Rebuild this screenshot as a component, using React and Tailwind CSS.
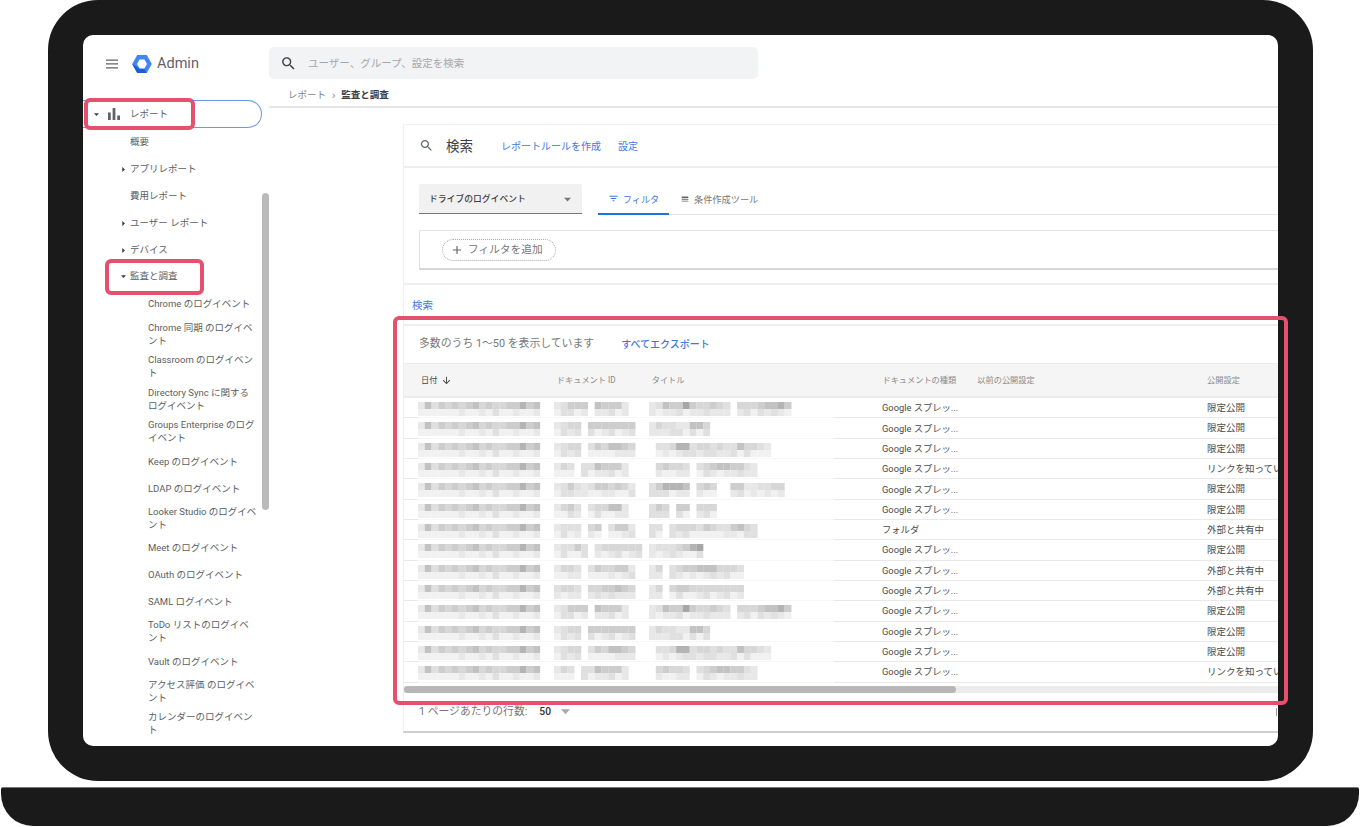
const SEARCH = "M15.5 14h-.79l-.28-.27C15.41 12.59 16 11.11 16 9.5 16 5.91 13.09 3 9.5 3S3 5.91 3 9.5 5.91 16 9.5 16c1.61 0 3.09-.59 4.23-1.57l.27.28v.79l5 4.99L20.49 19l-4.99-5zm-6 0C7.01 14 5 11.99 5 9.5S7.01 5 9.5 5 14 7.01 14 9.5 11.99 14 9.5 14z";

function Icon({ d, size = 14, color = "#5f6368" }) {
  return (
    <svg width={size} height={size} viewBox="0 0 24 24" fill={color} className="shrink-0">
      <path d={d} />
    </svg>
  );
}

function Caret({ dir = "down", color = "#3c4043", size = 5, className = "" }) {
  return (
    <svg width={size} height={size} viewBox="0 0 10 10" fill={color} className={"shrink-0 " + className}>
      {dir === "down" ? <path d="M0 2.5h10L5 8z" /> : <path d="M2.5 0v10L8 5z" />}
    </svg>
  );
}

const subItems = [
  ["概要", null],
  ["アプリレポート", "right"],
  ["費用レポート", null],
  ["ユーザー レポート", "right"],
  ["デバイス", "right"],
  ["監査と調査", "down"],
];

const logItems = [
  ["Chrome のログイベント"],
  ["Chrome 同期 のログイベ", "ント"],
  ["Classroom のログイベン", "ト"],
  ["Directory Sync に関する", "ログイベント"],
  ["Groups Enterprise のログ", "イベント"],
  ["Keep のログイベント"],
  ["LDAP のログイベント"],
  ["Looker Studio のログイベ", "ント"],
  ["Meet のログイベント"],
  ["OAuth のログイベント"],
  ["SAML ログイベント"],
  ["ToDo リストのログイベ", "ント"],
  ["Vault のログイベント"],
  ["アクセス評価 のログイベ", "ント"],
  ["カレンダーのログイベン", "ト"],
];

function Sidebar() {
  return (
    <aside className="w-[186px] h-full shrink-0 relative overflow-hidden text-[#5a5e62] text-[9.5px]">
      <div className="h-[65px] flex items-center pl-[22px] pb-[8px]">
        <svg width="16" height="16" viewBox="0 0 16 16" className="shrink-0 -ml-px">
          <path d="M2 3.4h12v1.3H2zM2 7.3h12v1.3H2zM2 11.2h12v1.3H2z" fill="#5f6368" />
        </svg>
        <svg width="20" height="20" viewBox="0 0 20 20" className="ml-[12px] shrink-0">
          <path d="M5.2 1h9.6L19.8 10l-5 9H5.2L.2 10z" fill="#4285f4" />
          <path d="M.2 10l5 9h9.6l-2.7-4.5H7.6z" fill="#1a5fd0" />
          <path d="M7.6 5.5h4.8L15 10l-2.6 4.5H7.6L5 10z" fill="#ffffff" />
        </svg>
        <span className="ml-[5px] text-[14.5px] text-[#5f6368] font-[Roboto,sans-serif]">Admin</span>
      </div>

      <div className="h-[28px] w-[179px] flex items-center border border-l-0 border-[#6f96e6] rounded-r-[14px] pl-[11px]">
        <Caret color="#3c4043" />
        <svg width="12" height="12" viewBox="0 0 13 13" fill="#5f6368" className="ml-[9px] shrink-0">
          <path d="M0 5h3v8H0zM5 0h3v13H5zM10 8h3v5h-3z" />
        </svg>
        <span className="ml-[10px]">レポート</span>
      </div>

      <div className="h-[1.5px]" />
      {subItems.map(([label, dir], i) => (
        <div key={label} className={"flex items-center " + (i === 0 || i === 5 ? "h-[26px]" : "h-[27px]")}>
          <div className="w-[43px] flex justify-end">
            {dir && <Caret dir={dir} color="#3c4043" />}
          </div>
          <span className="ml-[4px]">{label}</span>
        </div>
      ))}

      {logItems.map((lines, i) => (
        <div
          key={lines[0]}
          className={"flex flex-col justify-center pl-[65px] leading-[13px] whitespace-nowrap " + (i === 0 ? "h-[28px]" : lines.length > 1 ? "h-[32.5px]" : "h-[27px]")}
        >
          {lines.map((l) => (
            <span key={l}>{l}</span>
          ))}
        </div>
      ))}

      <div className="absolute left-[179px] top-[158px] w-[7px] h-[317px] rounded-full bg-[#bababa]" />
    </aside>
  );
}

const GRAYS = {
  1: "#f1f1f1",
  2: "#e8e8e8",
  3: "#e0e0e0",
  4: "#d7d7d7",
  5: "#cdcdcd",
  6: "#c2c2c2",
  7: "#b4b4b4",
  8: "#a6a6a6",
  9: "#969696",
};
const CELL = 6.78;

const DATE_TOP = "263545456454455756";
const DATE_BOT = "111111211213112112";

const MOSAIC = [
  ["23555 65552", "236558544543 44456675"],
  ["2344 5555555", "243322664"],
  ["2344 3546654", " 33477344343364432"],
  ["243 3365552", " 45443 345665532"],
  ["235323554542", "357776 454  55223344"],
  ["2453 344662", "354 55 444"],
  ["2333 45 3552", "33 3444354335643"],
  ["23353 3444444", "23334578"],
  ["2443 3544552", "24 34556664443"],
  ["3443 4455654", "24 45544444444"],
];
const rowsMosaic = [0, 1, 2, 3, 4, 5, 6, 7, 8, 9, 0, 1, 2, 3].map((i) => MOSAIC[i]);

function Strip({ pattern, x, y }) {
  return Array.from(pattern).map((c, i) => {
    if (c === " ") return null;
    return <rect key={i} x={x + i * CELL} y={y} width={CELL + 0.1} height={7} fill={GRAYS[Number(c)]} />;
  });
}

function Mosaic({ id, title }) {
  const soft = (s, shift) => Array.from(s).map((c, i) => (c === " " ? c : String(1 + ((Number(c) + i + shift) % 3)))).join("");
  return (
    <svg width="416" height="14" viewBox="0 0 416 14" className="block">
      <Strip pattern={DATE_TOP} x={0} y={0} />
      <Strip pattern={DATE_BOT} x={0} y={7} />
      <Strip pattern={id} x={136} y={0} />
      <Strip pattern={soft(id, 1)} x={136} y={7} />
      <Strip pattern={title} x={231} y={0} />
      <Strip pattern={soft(title, 2)} x={231} y={7} />
    </svg>
  );
}

const rows = [
  ["Google スプレッ...", "限定公開"],
  ["Google スプレッ...", "限定公開"],
  ["Google スプレッ...", "限定公開"],
  ["Google スプレッ...", "リンクを知ってい"],
  ["Google スプレッ...", "限定公開"],
  ["Google スプレッ...", "限定公開"],
  ["フォルダ", "外部と共有中"],
  ["Google スプレッ...", "限定公開"],
  ["Google スプレッ...", "外部と共有中"],
  ["Google スプレッ...", "外部と共有中"],
  ["Google スプレッ...", "限定公開"],
  ["Google スプレッ...", "限定公開"],
  ["Google スプレッ...", "限定公開"],
  ["Google スプレッ...", "リンクを知ってい"],
];

function Table() {
  return (
    <div className="flex flex-col">
      <div className="h-[35px] pt-[1px] flex items-center bg-[#f5f5f5] border-t border-b-2 border-[#ececec] text-[8.2px] text-[#8a8a8a] whitespace-nowrap">
        <div className="w-[153px] pl-[17px] flex items-center gap-[4px] text-[#444]">
          日付
          <Icon d="M20 12l-1.41-1.41L13 16.17V4h-2v12.17l-5.58-5.59L4 12l8 8 8-8z" size={11} color="#444" />
        </div>
        <div className="w-[95px]">ドキュメント ID</div>
        <div className="w-[231px]">タイトル</div>
        <div className="w-[95px]">ドキュメントの種類</div>
        <div className="w-[230px]">以前の公開設定</div>
        <div className="w-[71px]">公開設定</div>
      </div>
      {rows.map(([type, vis], i) => (
        <div key={i} className="h-[20.33px] flex text-[9.5px] text-[#4a4a4a] whitespace-nowrap">
          <div className="w-[14px] shrink-0 border-b border-[#e9e9e9]" />
          <div className="w-[416px] shrink-0 border-b border-[#f7f7f7] pt-[4px]">
            <Mosaic id={rowsMosaic[i][0]} title={rowsMosaic[i][1]} />
          </div>
          <div className="w-[48px] shrink-0 border-b border-[#e9e9e9]" />
          <div className="w-[325px] shrink-0 border-b border-[#e9e9e9] flex items-center pt-[1px] text-[9.3px]">{type}</div>
          <div className="w-[72px] shrink-0 border-b border-[#e9e9e9] flex items-center pt-[1px] overflow-hidden">{vis}</div>
        </div>
      ))}
      <div className="h-[7px] mt-[3px] bg-[#ececec]">
        <div className="h-full w-[552px] rounded-full bg-[#b7b7b7]" />
      </div>
    </div>
  );
}

function Card() {
  return (
    <section className="ml-[134px] mt-[16px] w-[875px] h-[609px] shrink-0 border-l border-t border-[#eeeeee] border-b-2 border-b-[#cfcfcf] overflow-hidden flex flex-col">
      <div className="h-[43px] shrink-0 border-b-2 border-[#eeeeee] flex items-center pl-[15px]">
        <Icon d={SEARCH} size={15} color="#5f6368" />
        <span className="ml-[12px] pt-[1px] text-[13.5px] text-[#3c4043]">検索</span>
        <span className="ml-[28px] pt-[1px] text-[10px] text-[#3f78e0]">レポートルールを作成</span>
        <span className="ml-[17px] pt-[1px] text-[10px] text-[#3f78e0]">設定</span>
      </div>

      <div className="h-[117px] shrink-0 border-b-2 border-[#eeeeee] pl-[15px] pt-[16px]">
        <div className="flex">
          <div className="w-[163px] h-[30px] bg-[#f1f1f1] rounded-t-[2px] border-b border-[#777777] flex items-center justify-between pl-[10px] pr-[11px] text-[8.8px] font-medium text-[#3c4043]">
            <span className="pt-[2px]">ドライブのログイベント</span>
            <Caret color="#777777" size={7} className="mt-[1px]" />
          </div>
          <div className="flex-1 ml-[16px] h-[31px] border-b border-[#e6e6e6] flex items-center text-[9.2px]">
            <div className="w-[71px] h-[31px] -mb-px border-b-2 border-[#1a73e8] flex items-center justify-center gap-[4px] text-[#3f78e0]">
              <Icon d="M10 18h4v-2h-4v2zM3 6v2h18V6H3zm3 7h12v-2H6v2z" size={11} color="#3f78e0" />
              <span className="pt-[2px]">フィルタ</span>
            </div>
            <div className="ml-[11px] flex items-center gap-[4px] text-[#777777]">
              <Icon d="M4 14h16v-2H4zM4 18h16v-2H4zM4 10h16V6H4z" size={10} color="#666666" />
              <span className="pt-[2px]">条件作成ツール</span>
            </div>
          </div>
        </div>
        <div className="mt-[15px] h-[40px] border border-[#e2e2e2] border-b-2 border-b-[#d6d6d6] border-r-0 pl-[22px] flex items-center">
          <div className="w-[114px] h-[22px] rounded-full border border-dotted border-[#aaaaaa] flex items-center pl-[7px] text-[10.7px] text-[#777777]">
            <Icon d="M19 13h-6v6h-2v-6H5v-2h6V5h2v6h6v2z" size={14} color="#666666" />
            <span className="ml-[4px] pt-[2px]">フィルタを追加</span>
          </div>
        </div>
      </div>

      <div className="h-[39px] shrink-0 pl-[8px] pt-[14px] text-[10.5px] leading-[14px] text-[#3f78e0]">検索</div>

      <div className="h-[39px] shrink-0 border-t-2 border-[#eeeeee] flex items-center pl-[15px]">
        <span className="text-[10.85px] text-[#777777]">多数のうち 1〜50 を表示しています</span>
        <span className="ml-[27px] pb-[1px] text-[10px] font-medium text-[#3f78e0]">すべてエクスポート</span>
      </div>

      <Table />

      <div className="flex-1 relative flex items-center pl-[15px] text-[10.8px] text-[#777777]">
        1 ページあたりの行数:
        <span className="ml-[12px] text-[10.3px] font-medium text-[#333333]">50</span>
        <Caret color="#aaaaaa" size={9} className="ml-[10px]" />
        <div className="absolute left-[872px] top-[15px] w-[1px] h-[8px] bg-[#999999]" />
      </div>
    </section>
  );
}

function Main() {
  return (
    <main className="flex-1 min-w-0 h-full flex flex-col">
      <div className="mt-[12px] w-[489px] h-[32px] shrink-0 rounded-[5px] bg-[#f1f3f4] flex items-center pl-[11px]">
        <Icon d={SEARCH} size={17} color="#3c4043" />
        <span className="ml-[11px] pt-[1px] text-[10.5px] text-[#a5a8ab]">ユーザー、グループ、設定を検索</span>
      </div>
      <div className="h-[29px] shrink-0 border-b-2 border-[#e6e6e6] flex items-center pl-[19px] pt-[5px] text-[9.5px]">
        <span className="text-[#80868b]">レポート</span>
        <span className="mx-[6px] text-[11px] leading-none text-[#80868b]">›</span>
        <span className="font-bold text-[#3c4043]">監査と調査</span>
      </div>
      <Card />
    </main>
  );
}

export default function App() {
  return (
    <div className="relative w-[1361px] h-[827px] bg-white overflow-hidden font-[Roboto,'Noto_Sans_CJK_JP',sans-serif]">
      <div className="ml-[48px] w-[1265px] h-[781px] bg-[#1a1a1a] rounded-[50px] pl-[35px] pt-[35px]">
        <div className="w-[1195px] h-[711px] bg-white rounded-[10px] overflow-hidden flex">
          <Sidebar />
          <Main />
        </div>
      </div>
      <div className="ml-[1px] mt-[6px] w-[1358px] h-[39px] bg-[#1a1a1a] border-t border-[#777777] rounded-b-[32px] rounded-t-[2px]" />

      <div className="absolute left-[84px] top-[98px] w-[111px] h-[32px] border-[4px] border-[#e4506e] rounded-[6px]" />
      <div className="absolute left-[105px] top-[259px] w-[99px] h-[36px] border-[4px] border-[#e4506e] rounded-[6px]" />
      <div className="absolute left-[393px] top-[316px] w-[895px] h-[389px] border-[4px] border-[#e4506e] rounded-[6px]" />
    </div>
  );
}
